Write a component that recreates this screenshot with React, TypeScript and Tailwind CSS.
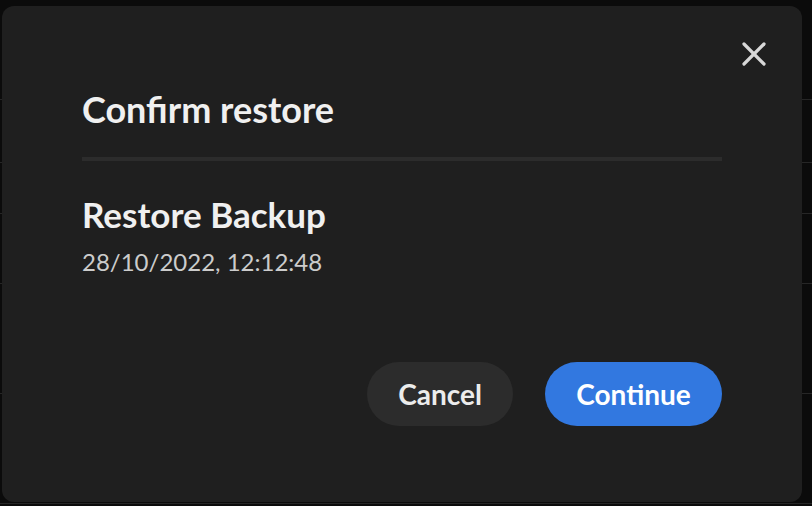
import { useState } from 'react';

const rowHeights = [100, 63, 51, 70, 110, 110];

function CloseIcon() {
  return (
    <svg width="24" height="24" viewBox="0 0 24 24" fill="none" stroke="currentColor" strokeWidth="3.2" strokeLinecap="round">
      <path d="M2 2 22 22" />
      <path d="M22 2 2 22" />
    </svg>
  );
}

export default function App() {
  const [open, setOpen] = useState(true);

  return (
    <div className="relative h-[506px] w-[812px] overflow-hidden bg-[#0b0b0b] font-['Lato',sans-serif]">
      {/* dimmed page behind the dialog */}
      <div className="flex flex-col">
        {rowHeights.map((h, i) => (
          <div key={i} className="border-b border-[#262626]" style={{ height: h }} />
        ))}
      </div>

      {open && (
        <div className="absolute left-[2px] top-[6px] flex h-[496px] w-[800px] flex-col rounded-[12px] bg-[#1f1f1f] px-[80px] pt-[81px]">
          <button
            onClick={() => setOpen(false)}
            className="absolute right-[36px] top-[36px] text-[#d8d8d8]"
          >
            <CloseIcon />
          </button>

          <h2 className="text-[36px] leading-[44px] font-bold text-[#f0f0f0]">Confirm restore</h2>
          <div className="mt-[26px] h-[4px] w-full bg-[#2c2c2c]" />

          <h3 className="mt-[32px] text-[35px] leading-[42px] font-bold text-[#f0f0f0]">Restore Backup</h3>
          <p className="mt-[11px] text-[24px] leading-[32px] text-[#cccccc]">28/10/2022, 12:12:48</p>

          <div className="mt-auto mb-[76px] flex justify-end gap-[32px]">
            <button className="h-[64px] w-[146px] rounded-full bg-[#2c2c2c] text-[28px] font-bold text-[#ececec]">
              Cancel
            </button>
            <button className="h-[64px] w-[177px] rounded-full bg-[#3278e0] text-[28px] font-bold text-white">
              Continue
            </button>
          </div>
        </div>
      )}
    </div>
  );
}
